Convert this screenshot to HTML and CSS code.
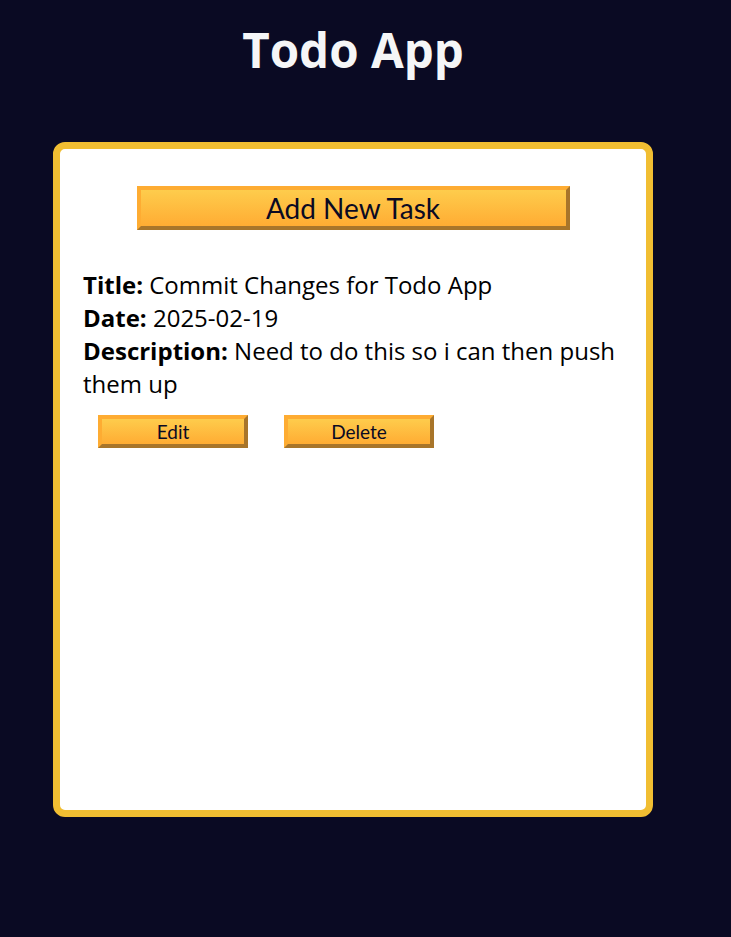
FILE: index.html
```html
<!DOCTYPE html>
<html lang="en">
<head>
<meta charset="utf-8">
<title>Todo App</title>
<link rel="stylesheet" href="styles.css">
</head>
<body>
<main class="app">
  <h1 class="app-title">Todo App</h1>
  <div class="todo-card">
    <button type="button" class="btn large-btn">Add New Task</button>
    <div class="task">
      <p><strong>Title:</strong> Commit Changes for Todo App</p>
      <p><strong>Date:</strong> 2025-02-19</p>
      <p><strong>Description:</strong> Need to do this so i can then push them up</p>
      <div class="task-actions">
        <button type="button" class="btn">Edit</button>
        <button type="button" class="btn">Delete</button>
      </div>
    </div>
  </div>
</main>
</body>
</html>
```

FILE: styles.css
```css
* { margin: 0; padding: 0; box-sizing: border-box; }

body {
  background-color: #0a0a23;
  font-family: "Open Sans", "Noto Sans", sans-serif;
}

.app {
  width: 706px;
  display: flex;
  flex-direction: column;
  align-items: center;
}

.app-title {
  color: #f5f6f7;
  font-family: "Open Sans", sans-serif;
  font-weight: 700;
  font-size: 47.5px;
  line-height: 65px;
  margin: 17px 0 60px;
}

.todo-card {
  background: #fff;
  width: 600px;
  height: 675px;
  border: 7px solid #f1be32;
  border-radius: 12px;
  padding: 22px 23px;
  display: flex;
  flex-direction: column;
}

.btn {
  font-family: "Lato", sans-serif;
  color: #0a0a23;
  background-color: #feac32;
  background-image: linear-gradient(#fecc4c, #ffac33);
  border-style: solid;
  border-width: 4px;
  border-color: #feac32 #a8752a #a8752a #feac32;
  width: 150px;
  height: 33px;
  font-size: 19px;
  line-height: 1;
  cursor: pointer;
}

.large-btn {
  align-self: center;
  width: 433px;
  height: 44px;
  font-size: 28px;
  margin-top: 15px;
}

.task {
  margin-top: 38px;
  color: #000;
  font-size: 24px;
  line-height: normal;
}

.task-actions {
  display: flex;
  gap: 36px;
  margin: 15px 0 0 15px;
}
```
